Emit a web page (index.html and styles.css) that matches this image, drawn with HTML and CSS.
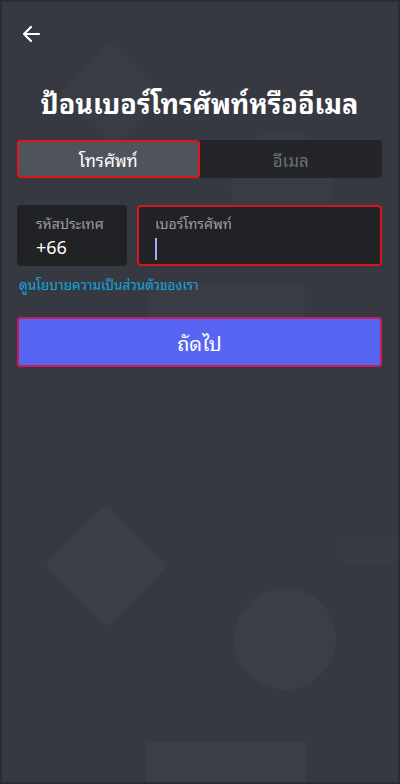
FILE: index.html
```html
<!DOCTYPE html>
<html lang="th">
<head>
<meta charset="utf-8">
<link rel="stylesheet" href="styles.css">
</head>
<body>
<div class="screen">
  <div class="bg" aria-hidden="true">
    <div class="shape diamond d1"></div>
    <div class="shape circle c1"></div>
    <div class="shape rect r1"></div>
    <div class="shape diamond d2"></div>
    <div class="shape circle c2"></div>
    <div class="shape rect r2"></div>
    <div class="dots"></div>
  </div>
  <div class="content">
    <button class="back" aria-label="ย้อนกลับ">
      <svg width="20" height="18" viewBox="0 0 20 18"><path d="M18 9H3M10 2L3 9l7 7" fill="none" stroke="#fff" stroke-width="2.2" stroke-linecap="round" stroke-linejoin="round"/></svg>
    </button>
    <h1 class="title">ป้อนเบอร์โทรศัพท์หรืออีเมล</h1>
    <div class="tabs">
      <div class="tab active">โทรศัพท์</div>
      <div class="tab">อีเมล</div>
    </div>
    <div class="fields">
      <div class="field country">
        <div class="label">รหัสประเทศ</div>
        <div class="value">+66</div>
      </div>
      <div class="field phone">
        <div class="label">เบอร์โทรศัพท์</div>
        <div class="caret"></div>
      </div>
    </div>
    <a class="link" href="#">ดูนโยบายความเป็นส่วนตัวของเรา</a>
    <button class="next">ถัดไป</button>
  </div>
</div>
</body>
</html>
```
FILE: styles.css
```css
html, body {
  margin: 0;
  padding: 0;
  background: #36393f;
}
.screen {
  position: relative;
  width: 400px;
  height: 784px;
  overflow: hidden;
  background: #363941;
  box-sizing: border-box;
  border: 2px solid #2b2d33;
  font-family: "Noto Sans Thai Looped", "Noto Looped Thai", "Loma", "Garuda", "Tlwg Typo", "Noto Sans Thai", "Noto Sans", sans-serif;
  color: #fff;
}
.bg {
  position: absolute;
  inset: 0;
}
.shape {
  position: absolute;
  background: #3b3e46;
}
.diamond { transform: rotate(45deg); border-radius: 6px; }
.circle { border-radius: 50%; }
.d1 { left: 72px; top: 52px; width: 78px; height: 78px; background: #393c44; }
.c1 { left: 228px; top: 128px; width: 104px; height: 104px; background: #393c44; }
.r1 { left: 145px; top: 282px; width: 158px; height: 40px; background: #393c44; }
.d2 { left: 60px; top: 520px; width: 88px; height: 88px; }
.c2 { left: 232px; top: 586px; width: 102px; height: 102px; }
.r2 { left: 144px; top: 740px; width: 160px; height: 44px; }
.dots {
  position: absolute;
  left: 340px;
  top: 534px;
  width: 58px;
  height: 28px;
  background: #383b43;
}
.content {
  position: relative;
  padding: 20px 16px 0 15px;
  display: flex;
  flex-direction: column;
}
.back {
  width: 30px;
  height: 24px;
  padding: 0;
  margin-left: 4px;
  border: 0;
  background: none;
  display: flex;
  align-items: center;
}
.title {
  margin: 36px 0 0;
  font-size: 27px;
  font-weight: 700;
  line-height: 40px;
  text-align: center;
  white-space: nowrap;
}
.tabs {
  margin-top: 18px;
  height: 38px;
  display: flex;
  background: #232529;
  border-radius: 4px;
}
.tab {
  flex: 1;
  display: flex;
  align-items: center;
  justify-content: center;
  font-size: 17px;
  color: #6c6f76;
  border-radius: 4px;
}
.tab.active {
  background: #4f545c;
  color: #fff;
  box-shadow: inset 0 0 0 2px #e0161b;
}
.fields {
  margin-top: 27px;
  display: flex;
  gap: 10px;
}
.field {
  height: 61px;
  background: #212226;
  border-radius: 4px;
  box-sizing: border-box;
  padding: 8px 16px 0 19px;
}
.country { width: 110px; }
.phone {
  flex: 1;
  box-shadow: inset 0 0 0 2px #d8141c;
  padding-left: 18px;
}
.label {
  font-size: 14px;
  line-height: 20px;
  color: #9a9da3;
}
.value {
  font-family: "Noto Sans", sans-serif;
  font-size: 18px;
  line-height: 22px;
  margin-top: 3px;
}
.caret {
  width: 2px;
  height: 22px;
  margin-top: 5px;
  background: #a8acf2;
}
.link {
  margin-top: 8px;
  font-size: 13.5px;
  line-height: 20px;
  color: #17a6dd;
  text-decoration: none;
  align-self: flex-start;
  margin-left: 2px;
}
.next {
  margin-top: 23px;
  height: 50px;
  border: 0;
  border-radius: 4px;
  background: #5865f2;
  box-shadow: inset 0 0 0 2px #c71f5c;
  color: #fff;
  font-family: inherit;
  font-size: 20px;
}
```
